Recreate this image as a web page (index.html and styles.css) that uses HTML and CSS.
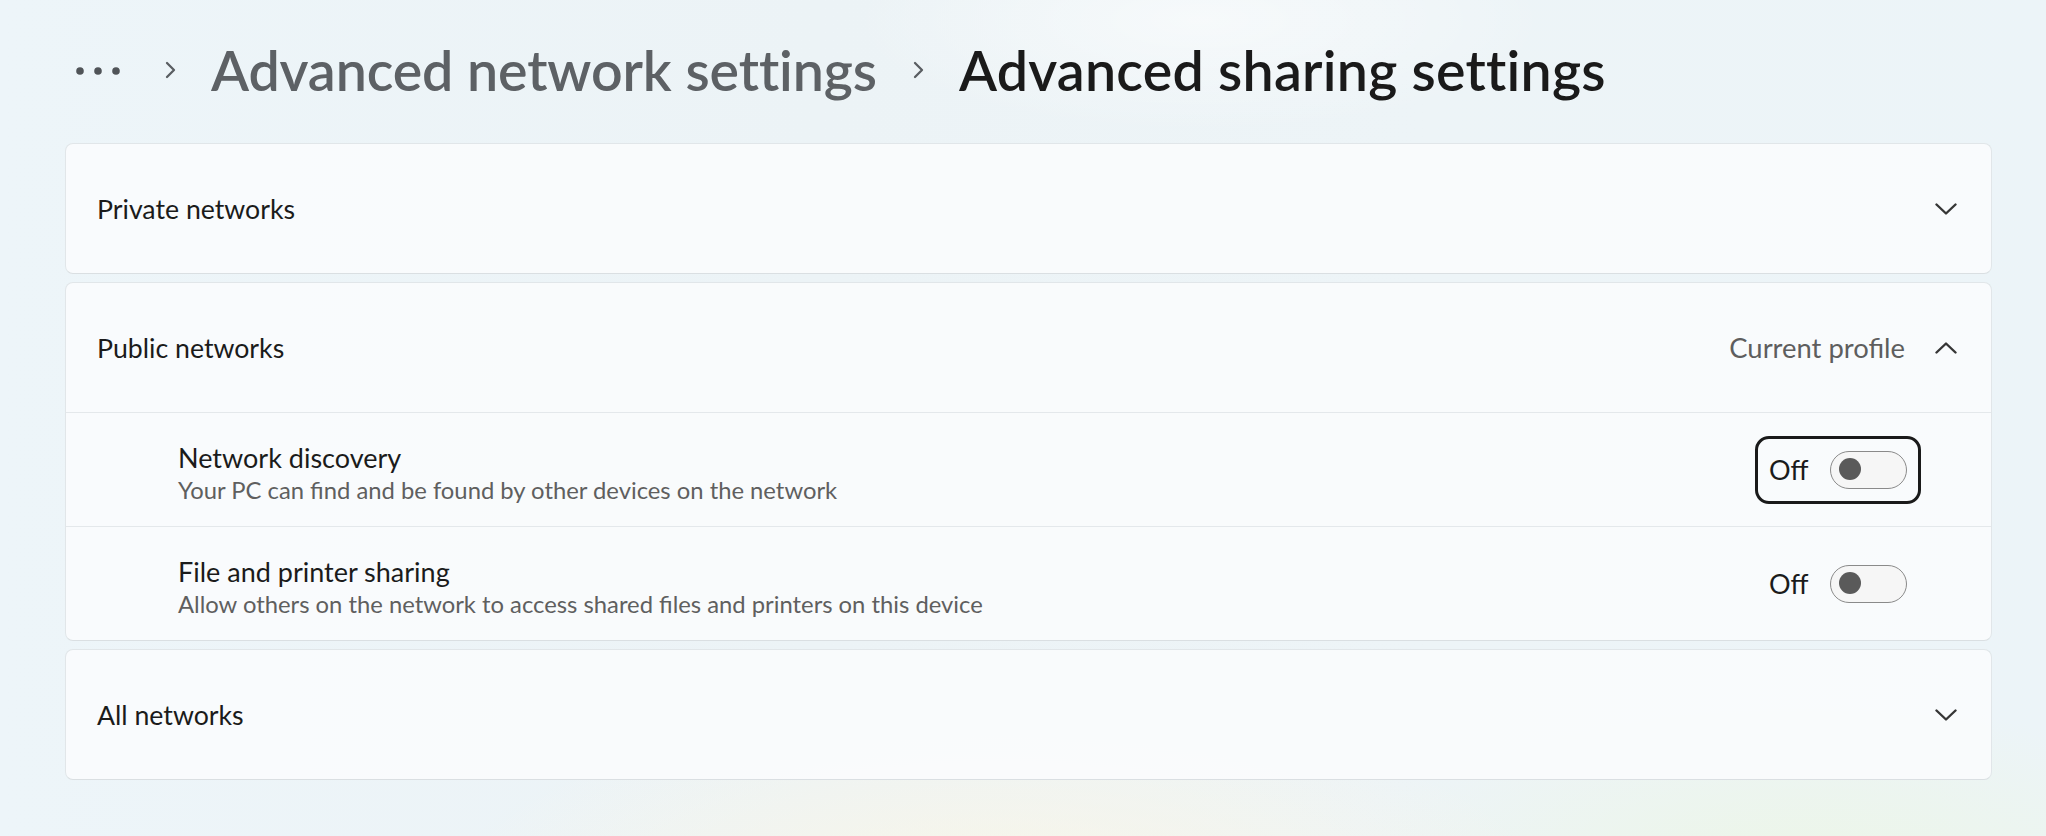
FILE: index.html
```html
<!DOCTYPE html>
<html lang="en">
<head>
<meta charset="utf-8">
<title>Advanced sharing settings</title>
<link rel="stylesheet" href="styles.css">
</head>
<body>
<div class="page">
  <header class="breadcrumb">
    <svg class="more" width="44" height="8" viewBox="0 0 44 8" aria-label="More"><circle cx="4" cy="4" r="3.8"/><circle cx="22" cy="4" r="3.8"/><circle cx="40" cy="4" r="3.8"/></svg>
    <svg class="sep" width="14" height="18" viewBox="0 0 14 18"><path d="M4 2 L11 9 L4 16"/></svg>
    <span class="crumb">Advanced network settings</span>
    <svg class="sep" width="14" height="18" viewBox="0 0 14 18"><path d="M4 2 L11 9 L4 16"/></svg>
    <span class="crumb current">Advanced sharing settings</span>
  </header>

  <main class="cards">
    <section class="card">
      <div class="card-head">
        <span class="label">Private networks</span>
        <svg class="chev" width="22" height="12" viewBox="0 0 22 12"><path d="M1.5 1.5 L11 10.5 L20.5 1.5"/></svg>
      </div>
    </section>

    <section class="card">
      <div class="card-head">
        <span class="label">Public networks</span>
        <span class="status">Current profile</span>
        <svg class="chev" width="22" height="12" viewBox="0 0 22 12"><path d="M1.5 10.5 L11 1.5 L20.5 10.5"/></svg>
      </div>
      <div class="row">
        <div class="row-text">
          <div class="row-title">Network discovery</div>
          <div class="row-desc">Your PC can find and be found by other devices on the network</div>
        </div>
        <div class="toggle-wrap focused">
          <span class="toggle-label">Off</span>
          <span class="toggle"><span class="knob"></span></span>
        </div>
      </div>
      <div class="row">
        <div class="row-text">
          <div class="row-title">File and printer sharing</div>
          <div class="row-desc">Allow others on the network to access shared files and printers on this device</div>
        </div>
        <div class="toggle-wrap">
          <span class="toggle-label">Off</span>
          <span class="toggle"><span class="knob"></span></span>
        </div>
      </div>
    </section>

    <section class="card">
      <div class="card-head">
        <span class="label">All networks</span>
        <svg class="chev" width="22" height="12" viewBox="0 0 22 12"><path d="M1.5 1.5 L11 10.5 L20.5 1.5"/></svg>
      </div>
    </section>
  </main>
</div>
</body>
</html>
```

FILE: styles.css
```css
html, body {
  margin: 0;
  padding: 0;
}

body {
  width: 2046px;
  height: 836px;
  overflow: hidden;
  font-family: Lato, "Segoe UI", "Noto Sans", sans-serif;
  color: #1b1b1b;
  background:
    radial-gradient(ellipse 800px 280px at 1000px 900px, rgba(250, 246, 230, 0.95), rgba(250, 246, 230, 0) 70%),
    radial-gradient(ellipse 650px 240px at 1800px 870px, rgba(236, 246, 230, 0.95), rgba(236, 246, 230, 0) 70%),
    radial-gradient(ellipse 500px 160px at 1200px 20px, rgba(255, 255, 255, 0.55), rgba(255, 255, 255, 0) 70%),
    linear-gradient(90deg, #edf5f9 0%, #ecf3f6 40%, #edf4f7 70%, #ecf4f8 100%);
}

.page {
  padding: 0 54px 0 65px;
}

.breadcrumb {
  display: flex;
  align-items: center;
  height: 143px;
  padding-left: 11px;
  padding-bottom: 4px;
  box-sizing: border-box;
}

.more {
  fill: #505458;
  margin-right: 43px;
  margin-top: 2px;
}

.sep {
  fill: none;
  stroke: #5a5e62;
  stroke-width: 2.3;
  stroke-linecap: round;
  stroke-linejoin: round;
}

.crumb {
  font-size: 55.5px;
  font-weight: 600;
  color: #5d6165;
  margin: 0 34px;
  letter-spacing: -0.1px;
}

.crumb.current {
  color: #1a1a1a;
  letter-spacing: 0.25px;
}

.cards {
  display: flex;
  flex-direction: column;
  gap: 8px;
}

.card {
  background: rgba(250, 252, 253, 0.88);
  border: 1px solid #e1e6e9;
  border-bottom-color: #dadfe2;
  border-radius: 8px;
}

.card-head {
  display: flex;
  align-items: center;
  height: 129px;
  padding: 0 34px 0 31px;
}

.label {
  flex: 1;
  font-size: 26.7px;
  color: #1b1b1b;
}

.status {
  font-size: 27.4px;
  color: #5e5e5e;
  margin-right: 30px;
}

.chev {
  fill: none;
  stroke: #363636;
  stroke-width: 2.4;
  stroke-linecap: round;
  stroke-linejoin: round;
}

.row {
  display: flex;
  align-items: center;
  height: 113px;
  border-top: 1px solid #e4e8eb;
  padding: 0 70px 0 112px;
}

.row-text {
  flex: 1;
  padding-top: 6px;
}

.row-title {
  font-size: 27px;
  color: #1b1b1b;
  line-height: 35px;
}

.row-desc {
  font-size: 23.8px;
  color: #5f5f5f;
  line-height: 31px;
}

.toggle-wrap {
  display: flex;
  align-items: center;
  gap: 24px;
  height: 62px;
  padding: 0 11px;
  border: 3px solid transparent;
  border-radius: 14px;
}

.toggle-wrap.focused {
  border-color: #1a1a1a;
}

.toggle-label {
  font-size: 27px;
  color: #1b1b1b;
  width: 37px;
}

.toggle {
  position: relative;
  display: block;
  box-sizing: border-box;
  width: 77px;
  height: 38px;
  border: 1.5px solid #8a8a8a;
  border-radius: 19px;
  background: #f6f6f6;
}

.knob {
  position: absolute;
  left: 7.5px;
  top: 6.5px;
  width: 22px;
  height: 22px;
  border-radius: 50%;
  background: #5a5a5a;
}
```
